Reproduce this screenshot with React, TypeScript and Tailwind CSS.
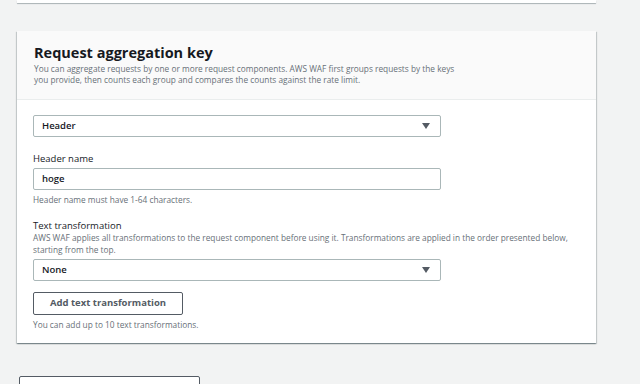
import React from "react";

const Caret = () => (
  <svg width="8" height="6" viewBox="0 0 8 6" className="shrink-0">
    <path d="M0 0 H8 L4 6 Z" fill="#545b64" />
  </svg>
);

const Select = ({ value }: { value: string }) => (
  <div className="flex h-[22px] w-[408px] items-center justify-between rounded-[2px] border border-[#aab7b8] bg-white pl-[8px] pr-[10px] text-[9.5px] font-semibold text-[#16191f]">
    <span>{value}</span>
    <Caret />
  </div>
);

export default function App() {
  return (
    <div
      className="h-[384px] w-[640px] overflow-hidden bg-[#f2f3f3] px-[17px]"
      style={{ fontFamily: '"Open Sans", "Noto Sans", sans-serif' }}
    >
      {/* previous card tail */}
      <div className="h-[3px] w-[579px] bg-white shadow-[0_1px_1px_rgba(0,28,36,0.3)]" />

      {/* Request aggregation key */}
      <div className="mt-[28px] w-[579px] bg-white shadow-[0_1px_1px_rgba(0,28,36,0.3),1px_1px_1px_rgba(0,28,36,0.15),-1px_1px_1px_rgba(0,28,36,0.15)]">
        <div className="border-b border-[#eaeded] bg-[#fafafa] px-[17px] pb-[14px] pt-[13px]">
          <h2 className="text-[14.5px] font-bold leading-[18px] text-[#16191f]">
            Request aggregation key
          </h2>
          <p className="mt-[1px] text-[8.3px] leading-[11px] text-[#687078]">
            You can aggregate requests by one or more request components. AWS WAF first groups requests by the keys
            <br />
            you provide, then counts each group and compares the counts against the rate limit.
          </p>
        </div>

        <div className="flex flex-col px-[16px] pb-[13px] pt-[15px]">
          <Select value="Header" />

          <div className="mt-[15px] text-[9.5px] leading-[13px] text-[#16191f]">Header name</div>
          <div className="mt-[3px] flex h-[22px] w-[408px] items-center rounded-[2px] border border-[#aab7b8] bg-white pl-[8px] text-[9.5px] font-semibold text-[#16191f]">
            hoge
          </div>
          <div className="mt-[4px] text-[8.3px] leading-[11px] text-[#687078]">
            Header name must have 1-64 characters.
          </div>

          <div className="mt-[14px] text-[9.5px] leading-[13px] text-[#16191f]">Text transformation</div>
          <p className="text-[8.3px] leading-[12px] text-[#687078]">
            AWS WAF applies all transformations to the request component before using it. Transformations are applied in the order presented below,
            <br />
            starting from the top.
          </p>
          <div className="mt-[3px]">
            <Select value="None" />
          </div>

          <button className="mt-[11px] flex h-[23px] w-[150px] items-center justify-center rounded-[2px] border border-[#545b64] bg-white text-[9.5px] font-bold text-[#545b64]">
            Add text transformation
          </button>
          <div className="mt-[4px] text-[8.3px] leading-[11px] text-[#687078]">
            You can add up to 10 text transformations.
          </div>
        </div>
      </div>

      {/* next button, cut off */}
      <div className="ml-[2px] mt-[33px] h-[24px] w-[181px] rounded-[2px] border border-[#545b64] bg-white" />
    </div>
  );
}
